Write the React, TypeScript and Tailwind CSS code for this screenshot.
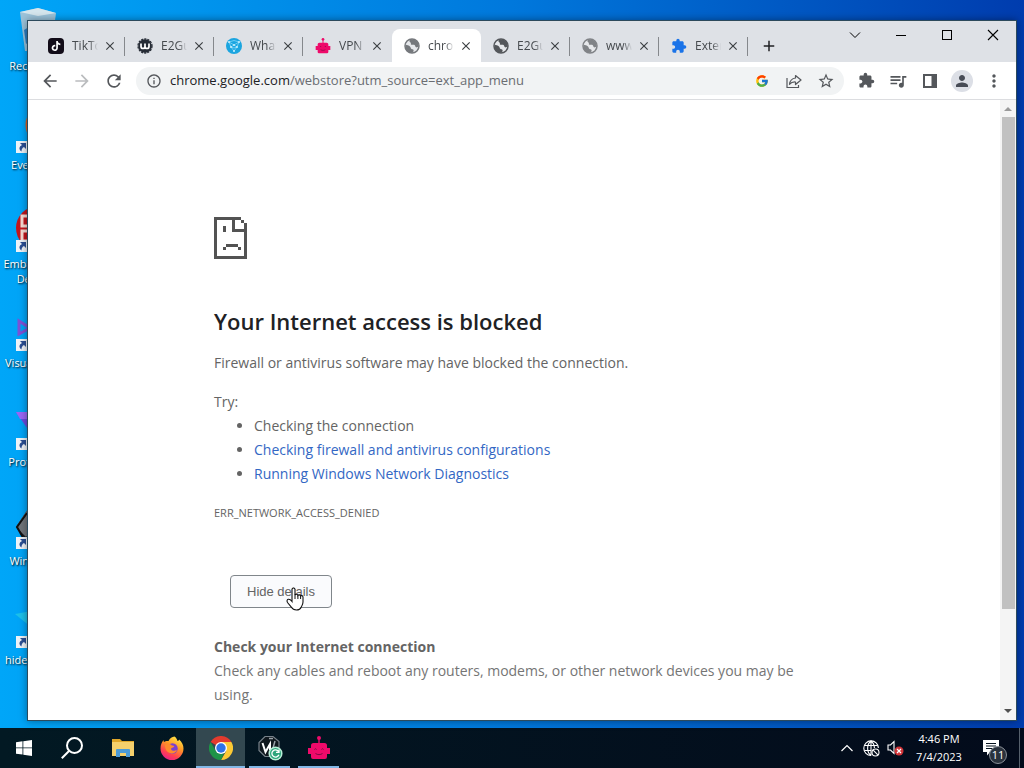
import React from 'react'
import { clsx } from 'clsx'
import {
  MdAdd,
  MdArrowBack,
  MdArrowForward,
  MdClose,
  MdExtension,
  MdInfoOutline,
  MdMoreVert,
  MdPerson,
  MdPublic,
  MdQueueMusic,
  MdRefresh,
  MdStarBorder,
} from 'react-icons/md'
import { FcGoogle } from 'react-icons/fc'
import { SiTiktok } from 'react-icons/si'

/* Icons */

function RobotIcon({ className }: { className?: string }) {
  return (
    <svg viewBox="0 0 22 24" className={className} aria-hidden="true">
      <g fill="#ee0a6a">
        <circle cx="11" cy="2" r="2" />
        <path d="M10.3 3h1.4v5h-1.4z" />
        <path d="M5.5 7h11A2.5 2.5 0 0 1 19 9.500V12h3v6h-3v3a2 2 0 0 1-2 2H5a2 2 0 0 1-2-2v-3H0v-6h3V9.500A2.500 2.500 0 0 1 5.500 7z" />
      </g>
      <g fill="none" stroke="#7d0a45" strokeWidth="1">
        <path d="M6.500 13.500c.5-1 1.500-1 2 0M13.500 13.500c.5-1 1.500-1 2 0M7.500 17.500c2 1.500 5 1.500 7 0" />
      </g>
    </svg>
  )
}

function TikTokIcon() {
  return (
    <span className="flex size-4 items-center justify-center rounded bg-[#120c18] text-white">
      <SiTiktok className="size-2.5" />
    </span>
  )
}

function GuardIcon() {
  return (
    <svg viewBox="0 0 16 16" className="size-4" aria-hidden="true">
      <circle cx="8" cy="8" r="6.800" fill="#262c36" />
      <circle cx="8" cy="8" r="7" fill="none" stroke="#262c36" strokeWidth="1.300" strokeDasharray="2.200 1" />
      <path d="M4 5.500v3q0 2 2 2t2-2V5.500M8 8.500q0 2 2 2t2-2V5.500" fill="none" stroke="#fff" strokeWidth="1.700" />
    </svg>
  )
}

function MeshIcon() {
  return (
    <svg viewBox="0 0 16 16" className="size-4" aria-hidden="true">
      <circle cx="8" cy="8" r="8" fill="#1ba5e0" />
      <path
        d="M3 4l5 3 5-3M3 4l2 5 3-2 3 2 2-5M5 9l3 4 3-4M5 9l3 1 3-1M3 4l5-1.500L13 4"
        fill="none"
        stroke="#8fdcfb"
        strokeWidth=".7"
      />
      <g fill="#c9effd">
        <circle cx="3" cy="4" r="1" />
        <circle cx="13" cy="4" r="1" />
        <circle cx="8" cy="7" r="1" />
        <circle cx="5" cy="9" r="1" />
        <circle cx="11" cy="9" r="1" />
        <circle cx="8" cy="13" r="1" />
      </g>
    </svg>
  )
}

/* Half-shaded globe shown for pages without a favicon */
function GlobeIcon({ className }: { className?: string }) {
  return (
    <svg viewBox="0 0 16 16" className={clsx('size-4', className)} aria-hidden="true">
      <circle cx="8" cy="8" r="7" fill="#e6e8eb" stroke="currentColor" strokeWidth="1.500" />
      <path
        d="M1.500 6.500C3 7 5 7.500 6 8.500s.5 2 1.500 2.500 1.500 0 2 1-.5 2-1 2.800C4 15 1 12 1.500 6.500zM6 1.500c-1 1.500-.5 2.500.5 3s-.3 1.700.8 2.200 2.200-.4 3.200.3.500 1.800 1.500 2.300 1.800-.3 2.700-.8C15.200 4 11 .6 6 1.500z"
        fill="currentColor"
      />
    </svg>
  )
}

function ShareIcon() {
  return (
    <svg viewBox="0 0 18 18" className="size-[18px]" fill="none" stroke="currentColor" strokeWidth="1.200" aria-hidden="true">
      <path d="M2 6v9.500h11.500V13" />
      <path d="M10.500 3.500L16 8l-5.500 4.500V10C8 9.800 6 10.500 4.500 12.300 4.900 8.700 7 6.500 10.500 6z" strokeLinejoin="round" />
    </svg>
  )
}

function SidePanelIcon() {
  return (
    <svg viewBox="0 0 14 14" className="size-[14px]" aria-hidden="true">
      <path d="M0 0h14v14H0zM2 2v10h6.500V2z" fill="currentColor" fillRule="evenodd" />
    </svg>
  )
}

function SadPageIcon() {
  return (
    <svg viewBox="0 0 11 14" className="h-[42px] w-[33px]" fill="#535353" shapeRendering="crispEdges" aria-hidden="true">
      <path d="M0 0h9v1H1v12h9V5H6V1h1v3h3V3h1v11H0zM9 1h1v1h-1zM10 2h1v1h-1z" />
      <path d="M3 3h1v2H3zM4 9h4v1H4zM3 10h1v1H3zM8 10h1v1H8z" />
    </svg>
  )
}

function HandCursor() {
  return (
    <svg viewBox="0 0 18 24" className="absolute top-3 left-14 h-6 w-[18px]" aria-hidden="true">
      <path
        d="M6 14.500V2.500a1.500 1.500 0 0 1 3 0V8c.3-1 2.600-1 2.900.4.5-.9 2.500-.6 2.700.6.700-.7 2.400-.4 2.400 1.200V15c0 2-1 3.500-1.700 5-.8 2-2.300 3-4.800 3s-4-.8-5-2.700L1.500 15.500c-.9-1.600-.4-3 .7-3.200 1.500-.2 2.700.7 3.800 2.200z"
        fill="#fff"
        stroke="#111"
        strokeWidth="1.100"
      />
      <path d="M9 7.500V12M11.900 8.500V12M14.600 9.200V12" stroke="#111" strokeWidth="1" />
    </svg>
  )
}

function WindowsIcon() {
  return (
    <svg viewBox="0 0 16 16" className="size-4" fill="#fff" aria-hidden="true">
      <path d="M0 2.200l6.500-.9v6.200H0zM7.300 1.200L16 0v7.500H7.300zM0 8.300h6.500v6.300L0 13.700zM7.300 8.300H16V16l-8.700-1.200z" />
    </svg>
  )
}

function SearchIcon() {
  return (
    <svg viewBox="0 0 22 22" className="size-[22px]" fill="none" stroke="#fff" strokeWidth="2" aria-hidden="true">
      <circle cx="13.500" cy="8.500" r="7.500" />
      <path d="M8 14L.8 21.200" />
    </svg>
  )
}

function FolderIcon() {
  return (
    <svg viewBox="0 0 22 20" className="h-5 w-[22px]" aria-hidden="true">
      <path d="M0 1h8l2 2h12v4H0z" fill="#e0a72a" />
      <path d="M0 4h22v14H0z" fill="#f5d06c" />
      <path d="M4 19v-7a1 1 0 0 1 1-1h12a1 1 0 0 1 1 1v7h-4v-4H8v4z" fill="#4c9bd6" />
    </svg>
  )
}

function FirefoxIcon() {
  return (
    <svg viewBox="0 0 24 24" className="size-6" aria-hidden="true">
      <defs>
        <linearGradient id="fox" x1="0.800" y1="0" x2="0.300" y2="1">
          <stop offset="0" stopColor="#fff04a" />
          <stop offset=".4" stopColor="#ff9a26" />
          <stop offset=".75" stopColor="#ff4050" />
          <stop offset="1" stopColor="#e8208a" />
        </linearGradient>
      </defs>
      <path
        d="M14.500.5c2 1.200 2.500 3 3 4.500 1-.2 1.500-.8 1.600-1.500C22 6 23.500 9 23.500 12.500a11.500 11.500 0 0 1-23 0C.5 9 1.500 6.500 3.500 4c0 1 .2 1.600.6 2.100C5.500 4.800 7 4.800 8.500 5c1.500-3 3.500-4 6-4.500z"
        fill="url(#fox)"
      />
      <circle cx="12.500" cy="12.500" r="5.200" fill="#7a3fd0" />
      <path d="M5 9c2-2 5-1.500 6.500.2l2.800.8c-.5 1.500-2 1.600-3 2.200-.7 1 .4 2.500 2.200 2.500 1.500 0 2.500-.8 3.500-.5-1 2.500-4 3.800-6.500 3C6.500 16 5 13 5 9z" fill="#ff8b2c" />
    </svg>
  )
}

function ChromeIcon() {
  return (
    <svg viewBox="0 0 24 24" className="size-6" aria-hidden="true">
      <path d="M12 12L1.600 6A12 12 0 0 1 22.400 6H12z" fill="#e33b2e" />
      <path d="M12 6h10.400A12 12 0 0 1 12 24l5.200-9z" fill="#fcc934" />
      <path d="M1.600 6l5.200 9 5.200 3 3-.8L12 24A12 12 0 0 1 1.600 6z" fill="#1e9447" />
      <circle cx="12" cy="12" r="6" fill="#fff" />
      <circle cx="12" cy="12" r="4.700" fill="#2f73e8" />
    </svg>
  )
}

function GuardSyncIcon() {
  return (
    <svg viewBox="0 0 26 26" className="size-[26px]" aria-hidden="true">
      <path d="M8 1.500h8l6 5v8l-5 7H8l-6-6v-8z" fill="#10181e" stroke="#78828a" strokeWidth="1.200" />
      <path d="M5.500 8l3 9 4.500-8v6" fill="none" stroke="#fff" strokeWidth="2" />
      <path d="M18 6l-2 7M12 3.500h4" fill="none" stroke="#9aa3aa" strokeWidth="1.500" />
      <circle cx="18.500" cy="18.500" r="6.300" fill="#2fa57c" stroke="#b9f0d8" strokeWidth="1.500" />
      <path d="M21.500 16.500a3.600 3.600 0 1 0 .4 3.200M22 14.500v2.800h-3" fill="none" stroke="#fff" strokeWidth="1.300" />
    </svg>
  )
}

function NetworkIcon() {
  return (
    <svg viewBox="0 0 17 17" className="size-[17px]" fill="none" stroke="#fff" strokeWidth="1.100" aria-hidden="true">
      <path d="M8 15.500A7.300 7.300 0 1 1 15.400 8" />
      <path d="M8 15.500C3.500 12 3.500 4.500 8 1c2.500 2 3.400 4.500 3.400 7M1.500 5.500h13M1.500 10.500H8M8 1v14.500" />
      <circle cx="12.500" cy="12.500" r="3.500" />
      <path d="M10.200 10.200l4.600 4.600" />
    </svg>
  )
}

function MutedIcon() {
  return (
    <svg viewBox="0 0 17 16" className="h-4 w-[17px]" aria-hidden="true">
      <path d="M1 5h2.500L7 1.500v12L3.500 10H1z" fill="none" stroke="#fff" strokeWidth="1.100" />
      <circle cx="12" cy="11" r="4.500" fill="#d13438" />
      <path d="M10 9l4 4M14 9l-4 4" stroke="#fff" strokeWidth="1.200" />
    </svg>
  )
}

function NoticeIcon() {
  return (
    <svg viewBox="0 0 16 16" className="size-4" aria-hidden="true">
      <path d="M0 0h16v12H7l-3 3.500V12H0z" fill="#fff" />
      <path d="M3 3.500h10M3 6h10M3 8.500h7" stroke="#07131f" strokeWidth="1" />
    </svg>
  )
}

/* Desktop */

const shortcuts = [
  {
    label: 'Recycle Bin',
    art: (
      <>
        <path d="M6 6l18-4 18 5-5 38H11z" fill="#9cc3da" />
        <path d="M6 6l18-4 18 5-18 3z" fill="#d5e6ee" />
        <path d="M10 24l10-6v14l-8 6z" fill="#2c7fc4" />
      </>
    ),
  },
  { label: 'Everything', art: <circle cx="32" cy="20" r="18" fill="none" stroke="#e2601c" strokeWidth="5" /> },
  {
    label: 'Embarcadero Dev-C++',
    art: (
      <>
        <circle cx="24" cy="24" r="22" fill="#c3161d" />
        <path d="M16 12H8v10h8M16 27H8v10h8" fill="none" stroke="#f7dcd4" strokeWidth="3" />
      </>
    ),
  },
  { label: 'Visual Studio', art: <path d="M5 18l11 7-11 6z" fill="none" stroke="#7d52d6" strokeWidth="3" /> },
  {
    label: 'Proton VPN',
    art: (
      <>
        <path d="M2 10h44L24 42z" fill="#6a4be0" />
        <path d="M2 10h44l-4 7H6z" fill="#9a66f5" />
      </>
    ),
  },
  {
    label: 'Windscribe',
    art: (
      <>
        <path d="M14 8h20l12 16-12 18H14L2 26z" fill="#1b1d20" />
        <path d="M14 8h20l-8 12-14 16L2 26z" fill="#70757a" />
        <path d="M13 12L3 26l8 14" fill="none" stroke="#111" strokeWidth="2" />
      </>
    ),
  },
  { label: 'hide.me VPN', art: <path d="M1 14l22-4 22 4-22 18z" fill="#1cc0ea" /> },
]

function Shortcut({ label, art, linked }: { label: string; art: React.ReactNode; linked: boolean }) {
  return (
    <div className="flex h-[99px] flex-col items-center text-center">
      <div className="relative size-12 shrink-0">
        <svg viewBox="0 0 48 48" className="size-12" aria-hidden="true">
          {art}
        </svg>
        {linked && (
          <svg viewBox="0 0 12 12" className="absolute bottom-0 left-0.5 size-3" aria-hidden="true">
            <path d="M0 0h12v12H0z" fill="#eef3f8" />
            <path d="M4 2h6v6L8 6c-2 1-2.500 2.500-2.500 4.500C2.500 8.500 3 5.500 6 4z" fill="#2a4f94" />
          </svg>
        )}
      </div>
      <span className="mt-1 text-[11px] leading-[15px] text-white [text-shadow:1px_1px_2px_#000]">{label}</span>
    </div>
  )
}

/* Browser */

const tabs = [
  { title: 'TikTok', icon: <TikTokIcon /> },
  { title: 'E2Guardian', icon: <GuardIcon /> },
  { title: 'WhatIs', icon: <MeshIcon /> },
  { title: 'VPN', icon: <RobotIcon className="size-4" /> },
  { title: 'chrome', icon: <GlobeIcon className="text-[#75787c]" />, active: true },
  { title: 'E2Guardian', icon: <GlobeIcon className="text-[#54575b]" /> },
  { title: 'www.', icon: <GlobeIcon className="text-[#808387]" /> },
  { title: 'Extensions', icon: <MdExtension className="size-4 text-[#1a73e8]" /> },
]

function TabStrip() {
  return (
    <div className="flex h-[41px] justify-between bg-[#dee1e6]">
      <div className="flex items-end pl-2">
        {tabs.map((tab, i) => {
          const divided = !tab.active && !tabs[i + 1]?.active
          return (
            <div
              key={i}
              className={clsx(
                'relative flex h-[33px] w-[89px] items-center pr-2 pl-3',
                tab.active && 'rounded-t-lg bg-white',
              )}
            >
              <span className="flex w-4 shrink-0 justify-center">{tab.icon}</span>
              <span className="ml-2 w-[26px] overflow-hidden text-xs whitespace-nowrap text-[#45494d] [mask-image:linear-gradient(to_right,#000_65%,transparent)]">
                {tab.title}
              </span>
              <button aria-label={`Close ${tab.title}`} className="ml-auto text-[#3c4043]">
                <MdClose className="size-[14px]" />
              </button>
              {divided && <span className="absolute top-2 right-0 h-[19px] w-px bg-[#85888c]" />}
            </div>
          )
        })}
        <button aria-label="New tab" className="flex h-[33px] w-[42px] items-center justify-center text-[#202124]">
          <MdAdd className="size-[18px]" />
        </button>
      </div>
      <div className="flex h-7 text-black">
        <button aria-label="Search tabs" className="flex w-[46px] items-center justify-center">
          <svg viewBox="0 0 12 12" className="size-3" fill="none" stroke="currentColor">
            <path d="M1 3.500l5 5 5-5" />
          </svg>
        </button>
        <button aria-label="Minimize" className="flex w-[46px] items-center justify-center">
          <span className="h-px w-[10px] bg-black" />
        </button>
        <button aria-label="Maximize" className="flex w-[46px] items-center justify-center">
          <span className="size-[10px] border border-black" />
        </button>
        <button aria-label="Close" className="flex w-[46px] items-center justify-center">
          <svg viewBox="0 0 12 12" className="size-3" fill="none" stroke="currentColor" strokeWidth="1.100">
            <path d="M1 1l10 10M11 1L1 11" />
          </svg>
        </button>
      </div>
    </div>
  )
}

function ToolButton({ label, children }: { label: string; children: React.ReactNode }) {
  return (
    <button aria-label={label} className="flex h-7 w-8 shrink-0 items-center justify-center">
      {children}
    </button>
  )
}

function Toolbar() {
  return (
    <div className="flex h-[38px] items-center border-b border-[#dcdde0] bg-white px-1.5 text-[#54575b]">
      <ToolButton label="Back">
        <MdArrowBack className="size-5" />
      </ToolButton>
      <ToolButton label="Forward">
        <MdArrowForward className="size-5 text-[#babcbe]" />
      </ToolButton>
      <ToolButton label="Reload">
        <MdRefresh className="size-5" />
      </ToolButton>
      <div className="mx-1.5 flex h-7 flex-1 items-center rounded-full bg-[#f1f3f4] pr-0.5 pl-2.5">
        <MdInfoOutline className="size-4 shrink-0" />
        <p className="ml-2 flex-1 text-[13px] whitespace-nowrap text-[#6a6d72]">
          <span className="text-[#202124]">chrome.google.com</span>/webstore?utm_source=ext_app_menu
        </p>
        <ToolButton label="Search with Google">
          <FcGoogle className="size-[14px]" />
        </ToolButton>
        <ToolButton label="Share this page">
          <ShareIcon />
        </ToolButton>
        <ToolButton label="Bookmark this tab">
          <MdStarBorder className="size-[18px]" />
        </ToolButton>
      </div>
      <ToolButton label="Extensions">
        <MdExtension className="size-[17px]" />
      </ToolButton>
      <ToolButton label="Media controls">
        <MdQueueMusic className="size-5" />
      </ToolButton>
      <ToolButton label="Side panel">
        <SidePanelIcon />
      </ToolButton>
      <ToolButton label="Profile">
        <span className="flex size-[22px] items-center justify-center rounded-full bg-[#dcdfe6]">
          <MdPerson className="size-[18px] text-[#474c56]" />
        </span>
      </ToolButton>
      <ToolButton label="Menu">
        <MdMoreVert className="size-5" />
      </ToolButton>
    </div>
  )
}

function ErrorPage() {
  return (
    <main className="min-w-0 flex-1 overflow-hidden pt-[117px]">
      <div className="mx-auto max-w-[600px] text-sm leading-6 text-[#646464]">
        <SadPageIcon />
        <h1 className="mt-[47px] text-[22px] leading-[30px] font-semibold text-[#202124]">
          Your Internet access is blocked
        </h1>
        <p className="mt-[15px]">Firewall or antivirus software may have blocked the connection.</p>
        <p className="mt-[15px]">Try:</p>
        <ul className="list-disc pl-10">
          <li>Checking the connection</li>
          <li>
            <a href="#firewall" className="text-[#3367c4]">Checking firewall and antivirus configurations</a>
          </li>
          <li>
            <a href="#diagnostics" className="text-[#3367c4]">Running Windows Network Diagnostics</a>
          </li>
        </ul>
        <p className="mt-[15px] text-[11px] leading-6">ERR_NETWORK_ACCESS_DENIED</p>
        <div className="relative mt-[50px] ml-4 w-fit">
          <button className="h-[33px] rounded border border-[#80868b] bg-[#fafbfd] px-4 font-['Liberation_Sans',sans-serif] text-[13px] text-[#646464]">
            Hide details
          </button>
          <HandCursor />
        </div>
        <h2 className="mt-[27px] font-bold">Check your Internet connection</h2>
        <p className="text-[#757575]">
          Check any cables and reboot any routers, modems, or other network devices you may be using.
        </p>
      </div>
    </main>
  )
}

function Scrollbar() {
  return (
    <div className="flex w-4 flex-col items-center bg-[#f4f4f4]">
      <svg viewBox="0 0 8 17" className="h-[17px] w-2 shrink-0" fill="#9a9a9a">
        <path d="M0 11l4-4 4 4z" />
      </svg>
      <div className="flex w-[13px] flex-1 flex-col">
        <div className="h-[84%] bg-[#c1c1c1]" />
      </div>
      <svg viewBox="0 0 8 17" className="h-[17px] w-2 shrink-0" fill="#505050">
        <path d="M0 6l4 4 4-4z" />
      </svg>
    </div>
  )
}

/* Taskbar */

const apps = [
  { name: 'File Explorer', icon: <FolderIcon /> },
  { name: 'Firefox', icon: <FirefoxIcon /> },
  { name: 'Google Chrome', icon: <ChromeIcon />, open: true, focused: true },
  { name: 'Windscribe', icon: <GuardSyncIcon />, open: true },
  { name: 'Robot VPN', icon: <RobotIcon className="h-6 w-[22px]" />, open: true },
]

function Taskbar() {
  return (
    <footer className="flex h-10 shrink-0 items-stretch justify-between bg-linear-to-r from-[#021923] to-[#030b1b] text-white">
      <div className="flex">
        <button aria-label="Start" className="flex w-12 items-center justify-center">
          <WindowsIcon />
        </button>
        <button aria-label="Search" className="mr-0.5 flex w-12 items-center justify-center">
          <SearchIcon />
        </button>
        {apps.map((app) => (
          <button
            key={app.name}
            aria-label={app.name}
            className={clsx(
              'relative flex w-[49px] items-center justify-center',
              app.focused && 'bg-[#334850]',
            )}
          >
            {app.icon}
            {app.open && (
              <span
                className={clsx('absolute bottom-0 h-0.5 bg-[#82b7e6]', app.focused ? 'inset-x-0' : 'inset-x-1')}
              />
            )}
          </button>
        ))}
      </div>
      <div className="flex items-center">
        <button aria-label="Show hidden icons" className="flex w-6 justify-center">
          <svg viewBox="0 0 12 8" className="h-2 w-3" fill="none" stroke="#fff" strokeWidth="1.200">
            <path d="M.5 7L6 1.500 11.500 7" />
          </svg>
        </button>
        <button aria-label="Network" className="flex w-6 justify-center">
          <NetworkIcon />
        </button>
        <button aria-label="Volume muted" className="flex w-6 justify-center">
          <MutedIcon />
        </button>
        <div className="w-16 text-center text-[11px] leading-[18px]">
          <div>4:46 PM</div>
          <div>7/4/2023</div>
        </div>
        <button aria-label="Notifications" className="relative flex h-10 w-12 items-center pl-3">
          <NoticeIcon />
          <span className="absolute right-3 bottom-1 flex size-[18px] items-center justify-center rounded-full border border-[#8a9098] bg-[#2a323d] text-[11px]">
            11
          </span>
        </button>
        <span className="mr-1 h-10 w-px bg-[#56606c]" />
      </div>
    </footer>
  )
}

export default function App() {
  return (
    <div className="flex h-screen flex-col overflow-hidden font-['Open_Sans','Noto_Sans',sans-serif]">
      <div className="relative min-h-0 flex-1 bg-linear-to-r from-[#00a6f8] via-[#0078dc] via-50% to-[#003cae]">
        <div className="w-[76px] pt-1.5">
          {shortcuts.map((item, i) => (
            <Shortcut key={item.label} label={item.label} art={item.art} linked={i > 0} />
          ))}
        </div>
        <div className="absolute top-5 right-[7px] bottom-[7px] left-[27px] flex flex-col border border-[#2c4a5c] bg-white shadow-[0_0_8px_rgba(0,0,0,0.4)]">
          <TabStrip />
          <Toolbar />
          <div className="flex min-h-0 flex-1">
            <ErrorPage />
            <Scrollbar />
          </div>
        </div>
      </div>
      <Taskbar />
    </div>
  )
}
